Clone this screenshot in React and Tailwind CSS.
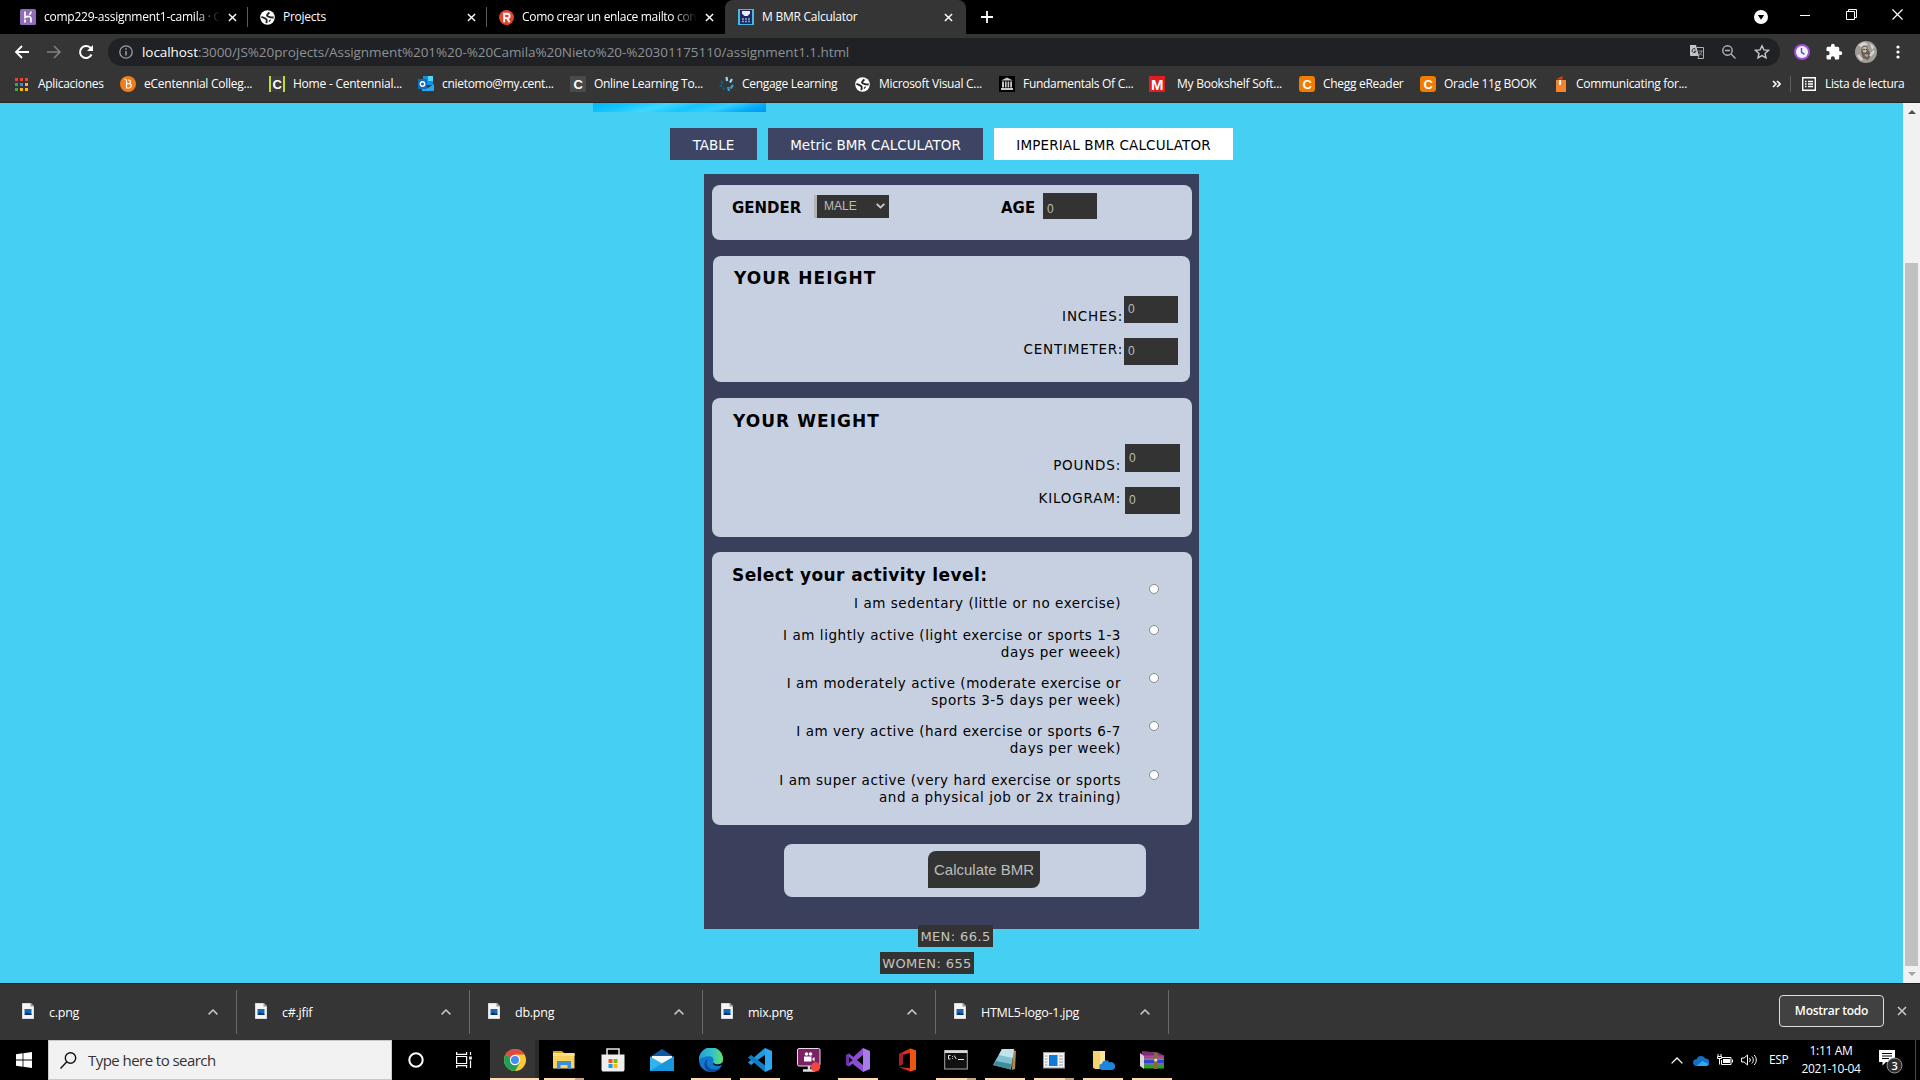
import React from "react";

/* ---------- small shared icons ---------- */
const Close = ({ className = "w-[9px] h-[9px]" }) => (
  <svg viewBox="0 0 10 10" className={"shrink-0 " + className} fill="none" stroke="currentColor" strokeWidth="1.6">
    <path d="M1 1l8 8M9 1l-8 8" />
  </svg>
);
const Globe = () => (
  <svg viewBox="0 0 16 16" className="w-[15px] h-[15px] shrink-0">
    <circle cx="8" cy="8" r="7.8" fill="#fff" />
    <path d="M1.500 7.200L5.800 9.200c1 .5 1.600 1 1.400 2.200L6.800 14" fill="none" stroke="#222427" strokeWidth="2" />
    <path d="M10 2.500L7.800 4.800c-.8 1 0 2 1.200 2.300l2.500.7 3 .2" fill="none" stroke="#222427" strokeWidth="2" />
    <path d="M9.500 12.500l1.800-2.200" fill="none" stroke="#222427" strokeWidth="1.200" />
  </svg>
);
const Letter = ({ box, children }) => (
  <span className={"flex items-center justify-center w-4 h-4 shrink-0 font-bold font-['Liberation_Sans'] text-[13px] leading-none text-white " + box}>{children}</span>
);

/* ---------- tab strip ---------- */
const Tab = ({ width, icon, title, titleWidth, fade }) => (
  <div className={"flex items-center h-[34px] shrink-0 " + width}>
    {icon}
    <span className={"ml-2 shrink-0 whitespace-nowrap overflow-hidden " + titleWidth + (fade ? " [mask-image:linear-gradient(to_right,#000_86%,transparent)]" : "")}>{title}</span>
    <Close />
  </div>
);
const Divider = () => <i className="w-px h-5 bg-[#5a5a5a] shrink-0" />;

function TabStrip() {
  return (
    <div className="flex items-center h-[34px] bg-black text-white text-[12px] tracking-[-0.25px]">
      <div className="w-5" />
      <Tab width="w-[227px]" titleWidth="w-[176px] mr-2" fade title="comp229-assignment1-camila · G"
        icon={<svg viewBox="0 0 16 16" className="w-4 h-4 shrink-0"><rect width="16" height="16" rx="1.500" fill="#8e6cb8" /><path d="M5 2.500v6c3-1.600 6-1.400 6 1v4M11 2.500c0 1.600-.6 2.400-1.600 3.200M5 10.500v3" fill="none" stroke="#fff" strokeWidth="1.700" /></svg>} />
      <Divider />
      <Tab width="w-[238px] pl-3" titleWidth="w-[176px] mr-2" title="Projects" icon={<Globe />} />
      <Divider />
      <Tab width="w-[238px] pl-3" titleWidth="w-[175px] mr-2 tracking-[-0.32px]" fade title="Como crear un enlace mailto con"
        icon={<svg viewBox="0 0 16 16" className="w-[15px] h-[15px] shrink-0"><circle cx="8" cy="8" r="8" fill="#e5452f" /><path d="M5.500 13V4H9a2.300 2.300 0 010 4.600H6M8.500 8.600L11.300 13" fill="none" stroke="#fff" strokeWidth="2" /></svg>} />
      <div className="flex shrink-0 h-[34px] w-[241px] pl-[13px] bg-[#353535] rounded-t-lg">
        <Tab width="w-[228px]" titleWidth="w-[175px] mr-[7px]" title="M BMR Calculator"
          icon={<svg viewBox="0 0 16 16" className="w-4 h-4 shrink-0"><rect width="16" height="16" fill="#49b8e8" /><rect x="2" y="1" width="12" height="14" fill="#1e2b5c" /><path d="M4 2h8v2.500L9.500 7h-3L4 4.500z" fill="#e8eefc" /><path d="M4 10h8M4 12.500h8" stroke="#8fa6d8" strokeWidth="1.500" strokeDasharray="2 1" /></svg>} />
      </div>
      <svg viewBox="0 0 12 12" className="ml-[15px] w-3 h-3" stroke="#fff" strokeWidth="1.800"><path d="M6 0v12M0 6h12" /></svg>
      <svg viewBox="0 0 14 14" className="ml-auto w-[14px] h-[14px]"><circle cx="7" cy="7" r="7" fill="#fff" /><path d="M3.800 5h6.400L7 9.800z" fill="#000" /></svg>
      <svg viewBox="0 0 10 10" className="ml-8 mb-[5px] w-[10px] h-[10px]"><path d="M0 5.500h10" stroke="#fff" /></svg>
      <svg viewBox="0 0 11 11" className="ml-9 mb-[6px] w-[11px] h-[11px]" fill="none" stroke="#fff"><path d="M.5 2.500h8v8h-8zM2.500 2.500v-2h8v8h-2" /></svg>
      <svg viewBox="0 0 11 11" className="ml-[35px] mr-[17px] mb-[6px] w-[11px] h-[11px]" stroke="#fff" strokeWidth="1.200"><path d="M.5.5l10 10M10.500.5l-10 10" /></svg>
    </div>
  );
}

/* ---------- address bar ---------- */
function Toolbar() {
  return (
    <div className="flex items-center h-[36px] pb-1 pt-1 bg-[#353535] text-white">
      <svg viewBox="0 0 16 16" className="ml-[14px] w-4 h-4" fill="none" stroke="#fff" strokeWidth="1.800"><path d="M15 8H2M8 2L2 8l6 6" /></svg>
      <svg viewBox="0 0 16 16" className="ml-4 w-4 h-4" fill="none" stroke="#808080" strokeWidth="1.600"><path d="M1 8h13M8 2l6 6-6 6" /></svg>
      <svg viewBox="0 0 16 16" className="ml-4 w-4 h-4" fill="none" stroke="#fff" strokeWidth="2"><path d="M13.500 10.500A6 6 0 1112.300 3.800L14 5.500" /><path d="M15 1v6H9z" fill="#fff" stroke="none" /></svg>
      <div className="flex items-center ml-[14px] h-7 w-[1672px] rounded-full bg-[#202124]">
        <svg viewBox="0 0 14 14" className="ml-[11px] w-[14px] h-[14px]" fill="none" stroke="#9aa0a6" strokeWidth="1.300"><circle cx="7" cy="7" r="6.200" /><path d="M7 6v4.500M7 3.300v1.500" strokeWidth="1.500" /></svg>
        <span className="ml-[9px] text-[13.5px] text-[#8d9195] whitespace-nowrap tracking-[-0.07px]"><span className="text-white">localhost</span>:3000/JS%20projects/Assignment%201%20-%20Camila%20Nieto%20-%20301175110/assignment1.1.html</span>
        <svg viewBox="0 0 14 14" className="ml-auto w-[14px] h-[14px]"><path d="M0 0h6l3 11H1a1 1 0 01-1-1z" fill="#c4c4c4" /><path d="M7 2.500h6.500v11H8l1-3" fill="none" stroke="#b0b0b0" /><path d="M5.500 4.200A2 2 0 106 6.200H4" fill="none" stroke="#303134" /><path d="M8.500 6h4M12 6c-.5 2-1.500 3-3 4M9.500 7.500l2.500 3" fill="none" stroke="#b0b0b0" strokeWidth=".8" /></svg>
        <svg viewBox="0 0 14 14" className="ml-[18px] w-[14px] h-[14px]" fill="none" stroke="#b4b4b4" strokeWidth="1.400"><circle cx="5.500" cy="5.500" r="4.700" /><path d="M9 9l4.500 4.500M3 5.500h5" /></svg>
        <svg viewBox="0 0 16 16" className="ml-[18px] mr-[10px] w-[16px] h-[16px]" fill="none" stroke="#c8c8c8" strokeWidth="1.400"><path d="M8 1.800l1.900 4.100 4.500.5-3.400 3 1 4.500L8 11.600l-4 2.300 1-4.500-3.400-3 4.500-.5z" /></svg>
      </div>
      <svg viewBox="0 0 16 16" className="ml-[14px] w-4 h-4"><circle cx="8" cy="8" r="8" fill="#a04fd8" /><circle cx="8" cy="8" r="6" fill="#f4f2ff" /><path d="M7.500 4v4.300l3 2" fill="none" stroke="#5b4bb5" strokeWidth="1.400" /></svg>
      <svg viewBox="0 0 24 24" className="ml-[15px] w-[18px] h-[18px]" fill="#fff"><path d="M20.500 11H19V7a2 2 0 00-2-2h-4V3.500a2.500 2.500 0 00-5 0V5H4a2 2 0 00-2 2v3.800h1.500a2.700 2.700 0 010 5.400H2V20a2 2 0 002 2h3.800v-1.500a2.700 2.700 0 015.400 0V22H17a2 2 0 002-2v-4h1.500a2.500 2.500 0 000-5z" /></svg>
      <svg viewBox="0 0 22 22" className="ml-[12px] w-[22px] h-[22px]"><circle cx="11" cy="11" r="11" fill="#a09e99" /><path d="M3 4l6-3 4 2-5 4zM15 2l4 4-2 3z" fill="#d8d7d2" /><path d="M7 6c2.500-3 6-1 6 2l3 6-3 5-5-2-2-6z" fill="#6b5f55" /><path d="M7.500 7c2-2.500 5-1 5 1.500L10.500 11.500l-2.500-.5z" fill="#cfc3b5" /><path d="M3 14l4 5M15 15l4-5" stroke="#d5d4d0" strokeWidth="2.500" /><path d="M10 14l3 1" stroke="#b5a798" strokeWidth="2" /><circle cx="9" cy="8.500" r=".8" fill="#222" /><circle cx="11.400" cy="8.500" r=".8" fill="#222" /></svg>
      <svg viewBox="0 0 4 14" className="ml-[19px] w-1 h-[14px]" fill="#fff"><circle cx="2" cy="2" r="1.600" /><circle cx="2" cy="7" r="1.600" /><circle cx="2" cy="12" r="1.600" /></svg>
    </div>
  );
}

/* ---------- bookmarks ---------- */
const bookmarks = [
  { w: "w-[105px]", gap: "ml-[10px]", t: "Aplicaciones", i: <svg viewBox="0 0 13 13" className="w-[13px] h-[13px]"><path d="M0 0h3v3H0zM5 0h3v3H5zM10 0h3v3h-3z" fill="#ea4335" /><path d="M0 5h3v3H0z" fill="#34a853" /><path d="M5 5h3v3H5z" fill="#4285f4" /><path d="M10 5h3v3h-3zM5 10h3v3H5zM10 10h3v3h-3z" fill="#fbbc05" /><path d="M0 10h3v3H0z" fill="#34a853" /></svg> },
  { w: "w-[149px]", gap: "ml-2 tracking-[-0.25px]", t: "eCentennial Colleg...", i: <svg viewBox="0 0 16 16" className="w-4 h-4"><circle cx="8" cy="8" r="8" fill="#ef7d1a" /><path d="M4.500 3l2 1v8h3a2.200 2.200 0 000-4.300H7M9.500 7.700A2 2 0 009 4H8" fill="none" stroke="#fff" strokeWidth="1.200" /></svg> },
  { w: "w-[149px]", gap: "ml-2 tracking-[-0.23px]", t: "Home - Centennial...", i: <Letter box="bg-[#3c3c3c] border-x-2 border-[#c6d92f]">C</Letter> },
  { w: "w-[152px]", gap: "ml-2", t: "cnietomo@my.cent...", i: <svg viewBox="0 0 16 16" className="w-4 h-4"><path d="M5 0h10v9H5z" fill="#1490df" /><path d="M10 0h5v5h-5z" fill="#50d9ff" /><path d="M4 8l6 4 6-4v7H4z" fill="#28a8ea" /><rect y="3" width="9" height="10" fill="#0f6cbd" /><circle cx="4.500" cy="8" r="2.200" fill="none" stroke="#fff" strokeWidth="1.400" /></svg> },
  { w: "w-[148px]", gap: "ml-2", t: "Online Learning To...", i: <Letter box="bg-[#4a4a4a]">C</Letter> },
  { w: "w-[137px]", gap: "ml-2", t: "Cengage Learning", i: <svg viewBox="0 0 16 16" className="w-4 h-4" fill="none" strokeWidth="2.200"><path d="M8.500 1l.6 4M14 3l-2 3.500" stroke="#9fd8f2" /><path d="M15 9l-2.500 3.500M10 11l1 4" stroke="#2f9fd6" /><path d="M3 5.500l2 1.500M1.500 10l3-.5M5 13l1.500-1" stroke="#12628f" /></svg> },
  { w: "w-[144px]", gap: "ml-[9px]", t: "Microsoft Visual C...", i: <Globe /> },
  { w: "w-[150px]", gap: "ml-2", t: "Fundamentals Of C...", i: <svg viewBox="0 0 16 16" className="w-4 h-4"><rect width="16" height="16" fill="#000" /><path d="M8 1.500l6 3H2zM3 5.500h2v6H3zM6 5.500h1.600v6H6zM8.600 5.500h1.600v6H8.600zM11.200 5.500h1.800v6h-1.800zM2 12h12v2H2z" fill="#c9c9c9" /></svg> },
  { w: "w-[150px]", gap: "ml-[12px] tracking-[-0.25px]", t: "My Bookshelf Soft...", i: <Letter box="bg-[#e41b23] !text-[15px]">M</Letter> },
  { w: "w-[121px]", gap: "ml-2", t: "Chegg eReader", i: <Letter box="bg-[#f07c00] rounded-[3px]">C</Letter> },
  { w: "w-[133px]", gap: "ml-2", t: "Oracle 11g BOOK", i: <Letter box="bg-[#f07c00] rounded-[3px]">C</Letter> },
  { w: "w-[221px]", gap: "ml-[7px]", t: "Communicating for...", i: <svg viewBox="0 0 16 16" className="w-4 h-4"><path d="M3 4h10v12H3z" fill="#f5842b" /><path d="M3 3.500L9.500 0v3.500z" fill="#d9461d" /><path d="M6 4h2v5H6z" fill="#fff" /></svg> },
];

function Bookmarks() {
  return (
    <div className="flex items-center h-[33px] pb-1 pl-[15px] bg-[#353535] border-b border-[#262626] text-white text-[12px] tracking-[-0.3px]">
      {bookmarks.map((b) => (
        <div key={b.t} className={"flex items-center shrink-0 " + b.w}>
          {b.i}
          <span className={"whitespace-nowrap " + b.gap}>{b.t}</span>
        </div>
      ))}
      <svg viewBox="0 0 9 8" className="w-[9px] h-2 -ml-[2px]" fill="none" stroke="#fff" strokeWidth="1.600"><path d="M1 1l3 3-3 3M5 1l3 3-3 3" /></svg>
      <i className="ml-[9px] w-px h-4 bg-[#5f5f5f]" />
      <svg viewBox="0 0 14 14" className="ml-[11px] w-[14px] h-[14px]" fill="none" stroke="#fff"><path d="M.7.7h12.600v12.600H.7z" strokeWidth="1.400" /><path d="M3 4.500h1.500M6 4.500h5M3 7h1.500M6 7h5M3 9.500h1.500M6 9.500h5" strokeWidth="1.300" /></svg>
      <span className="ml-[9px] whitespace-nowrap tracking-[-0.35px]">Lista de lectura</span>
    </div>
  );
}

/* ---------- calculator page ---------- */
const Field = ({ className }) => (
  <div className={"bg-[#333333] pl-1 text-[12px] font-normal text-[#bdbdbd] font-['Liberation_Sans'] leading-[26px] shrink-0 " + className}>0</div>
);

const activities = [
  { h: "h-8", lines: ["I am sedentary (little or no exercise)"] },
  { h: "h-12", lines: ["I am lightly active (light exercise or sports 1-3", "days per weeek)"] },
  { h: "h-12", lines: ["I am moderately active (moderate exercise or", "sports 3-5 days per week)"] },
  { h: "h-[49px]", lines: ["I am very active (hard exercise or sports 6-7", "days per week)"] },
  { h: "h-[34px]", lines: ["I am super active (very hard exercise or sports", "and a physical job or 2x training)"] },
];
const radioGaps = ["h-[41px]", "h-12", "h-12", "h-[49px]", "h-[10px]"];

function Page() {
  return (
    <div className="flex h-[880px] bg-[#44cff3]">
      <div className="w-[1903px] h-[880px] overflow-hidden font-['DejaVu_Sans']">
        <div className="ml-[593px] w-[173px] h-[9px] bg-[linear-gradient(165deg,#00b7f8_0%,#14c4fc_20%,#3fd8ff_38%,#16c5fd_55%,#34cfff_70%,#08aefa_85%,#0092f5_100%)]" />
        <div className="flex gap-[11px] ml-[670px] mt-4 h-8 text-[13.5px] leading-[34px] text-center text-white whitespace-nowrap">
          <div className="w-[87px] bg-[#3d4464]">TABLE</div>
          <div className="w-[215px] bg-[#3d4464]">Metric BMR CALCULATOR</div>
          <div className="w-[239px] bg-white text-black tracking-[0.15px]">IMPERIAL BMR CALCULATOR</div>
        </div>

        <div className="ml-[704px] mt-[14px] w-[495px] h-[755px] pt-[11px] pl-2 bg-[#3a3f5b] text-black">
          <section className="flex items-start w-[480px] h-[55px] pl-5 rounded-lg bg-[#c7d0e1] font-bold text-[15px]">
            <span className="w-[82px] pt-3">GENDER</span>
            <div className="flex items-center justify-between mt-[10px] w-[75px] h-[23px] pb-[2px] pl-[7px] pr-1 border-l-[3px] border-[#b3b3b3] bg-[#333333] text-[12px] font-normal text-[#bdbdbd] font-['Liberation_Sans']">
              MALE
              <svg viewBox="0 0 9 6" className="w-[9px] h-[6px]" fill="none" stroke="#d0d0d0" strokeWidth="1.800"><path d="M.7.8l3.800 3.800L8.300.8" /></svg>
            </div>
            <span className="ml-[112px] w-[42px] pt-3">AGE</span>
            <Field className="mt-2 w-[54px] h-[26px] !leading-[32px]" />
          </section>

          <section className="flex mt-4 ml-px w-[477px] h-[126px] pl-[21px] rounded-lg bg-[#c7d0e1]">
            <h2 className="w-[200px] pt-[11px] text-[17px] font-bold leading-[22px] tracking-[1.05px] whitespace-nowrap">YOUR HEIGHT</h2>
            <div className="w-[189px] pt-[52px] text-right text-[13.5px] tracking-[0.8px] leading-[17px]">
              <p>INCHES:</p>
              <p className="mt-4">CENTIMETER:</p>
            </div>
            <div className="ml-px pt-10">
              <Field className="w-[54px] h-[27px]" />
              <Field className="mt-[15px] w-[54px] h-[27px]" />
            </div>
          </section>

          <section className="flex mt-4 w-[480px] h-[139px] pl-[21px] rounded-lg bg-[#c7d0e1]">
            <h2 className="w-[200px] pt-3 text-[17px] font-bold leading-[22px] tracking-[1.05px] whitespace-nowrap">YOUR WEIGHT</h2>
            <div className="w-[188px] pt-[59px] text-right text-[13.5px] tracking-[0.8px] leading-[17px]">
              <p>POUNDS:</p>
              <p className="mt-4">KILOGRAM:</p>
            </div>
            <div className="ml-1 pt-[46px]">
              <Field className="w-[55px] h-7 !leading-7" />
              <Field className="mt-[15px] w-[55px] h-[27px]" />
            </div>
          </section>

          <section className="mt-[15px] w-[480px] h-[273px] pl-5 pt-3 rounded-lg bg-[#c7d0e1]">
            <h2 className="h-[22px] text-[17px] font-bold leading-[22px] tracking-[0.4px] whitespace-nowrap">Select your activity level:</h2>
            <div className="flex">
              <div className="w-[389px] pt-[9px] text-right text-[13.5px] tracking-[0.55px] leading-[17px]">
                {activities.map((a) => (
                  <div key={a.lines[0]} className={a.h}>
                    {a.lines.map((l) => <p key={l} className="whitespace-nowrap">{l}</p>)}
                  </div>
                ))}
              </div>
              <div className="ml-[28px] -mt-[2px]">
                {radioGaps.map((h, i) => (
                  <div key={i} className={h}><span className="block w-[10px] h-[10px] rounded-full bg-white border border-[#8a8a8a]" /></div>
                ))}
              </div>
            </div>
          </section>

          <section className="mt-[19px] ml-[72px] w-[362px] h-[53px] pt-[7px] pl-[144px] rounded-lg bg-[#c7d0e1]">
            <div className="w-[112px] h-[37px] rounded-tl-lg rounded-br-lg bg-[#333333] text-center text-[15px] leading-[37px] text-[#bdbdbd] font-['Liberation_Sans']">Calculate BMR</div>
          </section>
        </div>

        <div className="relative -mt-1 ml-[918px] w-[75px] h-[22px] bg-[#333333] text-center text-[13px] tracking-[0.4px] leading-[23px] text-[#c4c4c4] whitespace-nowrap">MEN: 66.5</div>
        <div className="mt-[5px] ml-[880px] w-[94px] h-[22px] bg-[#333333] text-center text-[13px] tracking-[0.4px] leading-[23px] text-[#c4c4c4] whitespace-nowrap">WOMEN: 655</div>
      </div>

      <div className="flex flex-col items-center w-[17px] h-[880px] bg-[#f1f1f1]">
        <svg viewBox="0 0 8 4" className="mt-[7px] w-2 h-1 shrink-0"><path d="M0 4l4-4 4 4z" fill="#505050" /></svg>
        <div className="mt-[149px] w-[13px] h-[703px] bg-[#c1c1c1]" />
        <svg viewBox="0 0 8 4" className="mt-[6px] w-2 h-1 shrink-0"><path d="M0 0l4 4 4-4z" fill="#a3a3a3" /></svg>
      </div>
    </div>
  );
}

/* ---------- downloads shelf ---------- */
const Downloads = () => (
  <div className="flex items-center h-[57px] bg-[#353535] border-t border-[#1f1f1f] text-white text-[12.5px] tracking-[-0.25px]">
    {["c.png", "c#.jfif", "db.png", "mix.png", "HTML5-logo-1.jpg"].map((n, i) => (
      <div key={n} className={"flex items-center h-11 border-r border-[#6a6a6a] " + (i === 0 ? "w-[237px] pl-[22px]" : "w-[233px] pl-[18px]")}>
        <svg viewBox="0 0 12 16" className="w-3 h-4 mb-[3px]"><path d="M0 0h8.500L12 3.500V16H0z" fill="#f5f5f5" stroke="#b5b5b5" strokeWidth=".8" /><path d="M8.500 0v3.500H12z" fill="#9a9a9a" /><rect x="2.500" y="6" width="7" height="6" fill="#1769b8" /><path d="M2.500 12l2.500-3 2 2 1.200-1 1.300 1.500v.5z" fill="#0a2f66" /></svg>
        <span className="ml-[15px] pt-[2px]">{n}</span>
        <svg viewBox="0 0 10 6" className="ml-auto mr-[18px] w-[10px] h-[6px]" fill="none" stroke="#c8c8c8" strokeWidth="1.500"><path d="M.6 5.400L5 1l4.400 4.400" /></svg>
      </div>
    ))}
    <div className="ml-auto mb-[2px] w-[105px] h-8 rounded-[4px] border border-[#dadce0] bg-[#414141] text-center leading-[30px] text-[12px] font-semibold">Mostrar todo</div>
    <Close className="ml-[13px] mr-[13px] mb-[2px] w-[10px] h-[10px] text-[#c8c8c8]" />
  </div>
);

/* ---------- taskbar ---------- */
const apps = [
  { n: "chrome", cls: "bg-[#353535] shadow-[inset_-4px_0_0_#2b2b2b]", bar: "w-full", i: <><circle cx="12" cy="12" r="11" fill="#fbc934" /><path d="M12 12L2.500 6.500A11 11 0 0121.500 6.500H12z" fill="#dd4b3e" /><path d="M12 12L2.500 6.500A11 11 0 0012 23l4.800-8.300z" fill="#1fa05a" /><circle cx="12" cy="12" r="5.200" fill="#fff" /><circle cx="12" cy="12" r="4" fill="#4a8af4" /></> },
  { n: "explorer", bar: "w-10", split: true, i: <><path d="M1 3h9l2 2H1z" fill="#e5a00d" /><rect x="1" y="5" width="21.500" height="15.500" fill="#fbd25e" /><path d="M1 5h21.500v3H1z" fill="#fde08a" /><path d="M5 21v-8h14v8h-3.500v-4h-7v4z" fill="#3b8ed8" /></> },
  { n: "store", i: <><path d="M6 8V1h12V8" fill="none" stroke="#e8e8e8" strokeWidth="1.500" /><path d="M.5 6.500h23V22l-1 1.500h-21L.5 22z" fill="#efefef" /><path d="M7.500 11h4v4h-4z" fill="#f25022" /><path d="M12.500 11h4v4h-4z" fill="#7fba00" /><path d="M7.500 16h4v4h-4z" fill="#00a4ef" /><path d="M12.500 16h4v4h-4z" fill="#ffb900" /></> },
  { n: "mail", i: <><path d="M0 9l12-8 12 8v5H0z" fill="#0a5aa8" /><path d="M2 8h20v8H2z" fill="#f6f6f6" /><path d="M0 8.500l12 7 12-7V23H0z" fill="#2fb4ee" /><path d="M0 23l12-7.500 12-7V23z" fill="#1897dd" /></> },
  { n: "edge", bar: "w-10", i: <><defs><linearGradient id="eg" x1="0" x2="1"><stop offset="0" stopColor="#1fa0dc" /><stop offset=".6" stopColor="#35c6c6" /><stop offset="1" stopColor="#6be05a" /></linearGradient></defs><circle cx="12" cy="12" r="12" fill="#1477cf" /><path d="M0 11.500A12 12 0 0124 11c0 4-3.500 5.500-7 5.500-2.500 0-3.800-1-3-2.200 1.500-2 .5-6-4-6-5 0-8.500 2-10 3.200z" fill="url(#eg)" /><path d="M9 11c-3 4-1 10 6 10.500 3 0 5.500-1 7-2.500-3 5-8 5.500-12 4.500C4 21 4 13 9 11z" fill="#0c4a97" /><path d="M14 14.500c-.5 2.500 2 3.500 5 3.300 1.500 0 3-.3 4-.8l2-4c-2 3-6 4-9 3z" fill="#000" /></> },
  { n: "vscode", bar: "w-10", i: <><path d="M17 0L0 14.500 3 17 18 6z" fill="#1f9be0" /><path d="M17 24L0 9.500 3 7l15 11z" fill="#0f7cc4" /><path d="M17 0l7 3v18l-7 3z" fill="#2ba8f2" /></> },
  { n: "recorder", i: <><rect x="0.500" y="0.500" width="22.500" height="17.500" rx="1.500" fill="#7b2263" stroke="#e9dbe6" /><path d="M6 22.500h12M12 18v4" stroke="#ddd" strokeWidth="2.500" /><circle cx="9.500" cy="6" r="1.800" fill="#fff" /><circle cx="13.500" cy="6" r="1.800" fill="#fff" /><path d="M7 8.500h7.500v5H7zM15 11l2.500-2v4.500z" fill="#fff" /><circle cx="18.500" cy="19" r="4.700" fill="#f5433f" /></> },
  { n: "vs", bar: "w-10", i: <><path d="M17 0l7 3v18l-7 3z" fill="#a87be8" /><path d="M17 0v7L3 18.500 0 17V7l3-1.500L17 17v7L3 13z" fill="#8a4fd0" /><path d="M3 5.500v3.600l4.500 3L3 15v3.500L0 17V7z" fill="#6a35a8" /><path d="M3 9v6l3.200-3z" fill="#000" /><path d="M17 8v8l-5-4z" fill="#000" /></> },
  { n: "office", i: <><path d="M4 6l11-5.500L21 2.500v19L15 23.500 4 19l11 1.200V5L8 6.800v9L4 18z" fill="#d8331a" /><path d="M15 .5l6 2v19l-6 2z" fill="#f0550f" /><path d="M4 6l4-2v12l-4 2z" fill="#a61e2a" /></> },
  { n: "cmd", bar: "w-10", split: true, i: <><rect x=".7" y="2.500" width="22.600" height="18.500" fill="#111" stroke="#a9a9a9" strokeWidth="1" /><path d="M.7 2.500h22.600v2.500H.7z" fill="#d8d8d8" /><path d="M6.500 7.500H4.500v3.500h2M8.500 8v.8M8.500 10.200v.8M10.200 7.500l2 3.500M14 11.500h6" fill="none" stroke="#e8e8e8" /></> },
  { n: "notepad", bar: "w-10", i: <><path d="M20 2l3 1-1 18-3 1z" fill="#b38a4a" /><path d="M9 1h12l-3 20.500L0 17z" fill="#7fc0ce" /><path d="M9 1h12l-1.500 9L6 7z" fill="#c2e3ea" /><path d="M3 13l15 3-.5 5.500L0 17z" fill="#3f8c9e" /></> },
  { n: "window", bar: "w-10", split: true, i: <><rect x="1.500" y="4.500" width="21" height="15.500" fill="#f2f2f2" stroke="#9b9b9b" /><rect x="7" y="7" width="8.500" height="11" fill="#0f7ad8" /><path d="M3 8h2.500M3 11h2.500M3 14h2.500M17 8h4M17 11h4M17 14h4M3 17h2.500M17 17h4" stroke="#a0a0a0" /></> },
  { n: "onedrive-folder", bar: "w-10", i: <><path d="M2 3h12v18H4l-2-1.500z" fill="#f7d070" /><path d="M9 3h5v18H9z" fill="#ffe49b" /><path d="M11 22a3.300 3.300 0 010-6.500 4 4 0 017.500-1 3.800 3.800 0 013 7.500z" fill="#1a86dc" /></> },
  { n: "winrar", bar: "w-10", i: <><path d="M2 3l16 1.500 6 3v2H2z" fill="#7c2f78" /><path d="M0 5l4 3v13l-4-3z" fill="#d8d3cf" /><path d="M4 7.500h20v3H4z" fill="#b23f9c" /><path d="M4 11.800h20v3.500H4z" fill="#2f45d6" /><path d="M4 16.800h20v3.700H4z" fill="#1fa81f" /><path d="M1 11.100h23M1 16h23" stroke="#e8e8e8" strokeWidth=".9" /><path d="M14 4.500h3.500V21H14z" fill="#8a6a34" /><circle cx="15.700" cy="12" r="1.600" fill="#ddd" /></> },
];

function Taskbar() {
  return (
    <div className="flex h-10 bg-black text-white">
      <div className="flex items-center w-12 pl-4">
        <svg viewBox="0 0 16 16" className="w-4 h-4" fill="#fff"><path d="M0 2.300L6.600 1.300V7.600H0zM7.400 1.200L16 0v7.600H7.400zM0 8.400h6.600v6.300L0 13.700zM7.400 8.400H16V16l-8.600-1.200z" /></svg>
      </div>
      <div className="flex items-center w-[344px] h-10 pl-[11px] bg-[#f2f2f2] border border-[#c9c9c9] text-[#333] text-[15px] tracking-[-0.55px]">
        <svg viewBox="0 0 17 17" className="w-[17px] h-[17px]" fill="none" stroke="#111" strokeWidth="1.400"><circle cx="10.500" cy="6" r="5.200" /><path d="M6.800 9.800L.5 16.500" /></svg>
        <span className="ml-[11px]">Type here to search</span>
      </div>
      <div className="flex items-center w-[98px] pl-4">
        <svg viewBox="0 0 16 16" className="w-4 h-4 shrink-0" fill="none" stroke="#fff" strokeWidth="2"><circle cx="8" cy="8" r="6.700" /></svg>
        <svg viewBox="0 0 16 16" className="ml-8 w-4 h-4 shrink-0" fill="none" stroke="#fff" strokeWidth="1.200"><path d="M.6 0v2.400h10V0M.6 16v-2.400h10V16M.6 4.500h10v7H.6zM14.500 0v3M14.500 8.500V16" /><path d="M13.200 4.500h2.600v3h-2.600z" fill="#fff" stroke="none" /></svg>
      </div>
      {apps.map((a) => (
        <div key={a.n} className={"flex flex-col items-center w-[49px] h-10 pt-2 shrink-0 " + (a.cls || "")}>
          <svg viewBox="0 0 24 24" className="w-6 h-6">{a.i}</svg>
          {a.bar && <div className={"mt-[6px] h-[2px] flex justify-end bg-[#fddcb0] " + a.bar}>{a.split && <i className="w-[9px] h-[2px] bg-[#c3a683]" />}</div>}
        </div>
      ))}
      <div className="flex items-center ml-auto text-[12px] tracking-[-0.35px]">
        <svg viewBox="0 0 12 7" className="w-3 h-[7px]" fill="none" stroke="#fff" strokeWidth="1.300"><path d="M.6 6.400L6 1l5.400 5.400" /></svg>
        <svg viewBox="0 0 16 11" className="ml-[10px] w-4 h-[11px]"><path d="M3.500 11a3.400 3.400 0 010-6.800 4.800 4.800 0 018.800-.6A3.700 3.700 0 0113 11z" fill="#0f6fc9" /><path d="M3.500 11l6-5 6 3a3 3 0 01-2.500 2z" fill="#35a8ec" /></svg>
        <svg viewBox="0 0 16 12" className="ml-2 w-4 h-3" fill="none" stroke="#fff"><path d="M5 3.500h9v7H4.500V6M15.500 5.500v3" /><path d="M6 5h7v4H6z" fill="#fff" stroke="none" /><path d="M1 0v2M4 0v2M.5 2.500h4v2h-4zM2.500 5v5.500" /></svg>
        <svg viewBox="0 0 17 14" className="ml-2 w-[17px] h-[14px]" fill="none" stroke="#fff"><path d="M.6 5h2.500L6.500 2v10L3.100 9H.6zM8.500 5c1 1.200 1 2.800 0 4M10.800 3.500c2 2 2 5 0 7M13.200 2c2.800 3 2.800 7 0 10" /></svg>
        <span className="ml-[11px] w-[30px]">ESP</span>
        <div className="ml-[1px] w-[62px] text-center leading-[18px] whitespace-nowrap"><p>1:11 AM</p><p>2021-10-04</p></div>
        <svg viewBox="0 0 24 24" className="ml-[17px] mt-1 w-6 h-6"><path d="M0 0h16v12H7l-3.500 3.500V12H0z" fill="#fff" /><path d="M3 3.500h10M3 6h10M3 8.500h7" stroke="#000" /><circle cx="15.500" cy="15.500" r="7.500" fill="#2d2d2d" stroke="#9a9a9a" /><text x="15.500" y="19.500" textAnchor="middle" fontSize="11" fontWeight="600" fill="#fff" fontFamily="Open Sans">3</text></svg>
        <i className="ml-[12px] mr-1 w-px h-10 bg-[#4a4a4a]" />
      </div>
    </div>
  );
}

export default function App() {
  return (
    <div className="w-[1920px] h-[1080px] overflow-hidden bg-black font-['Open_Sans',sans-serif]">
      <TabStrip />
      <Toolbar />
      <Bookmarks />
      <Page />
      <Downloads />
      <Taskbar />
    </div>
  );
}
